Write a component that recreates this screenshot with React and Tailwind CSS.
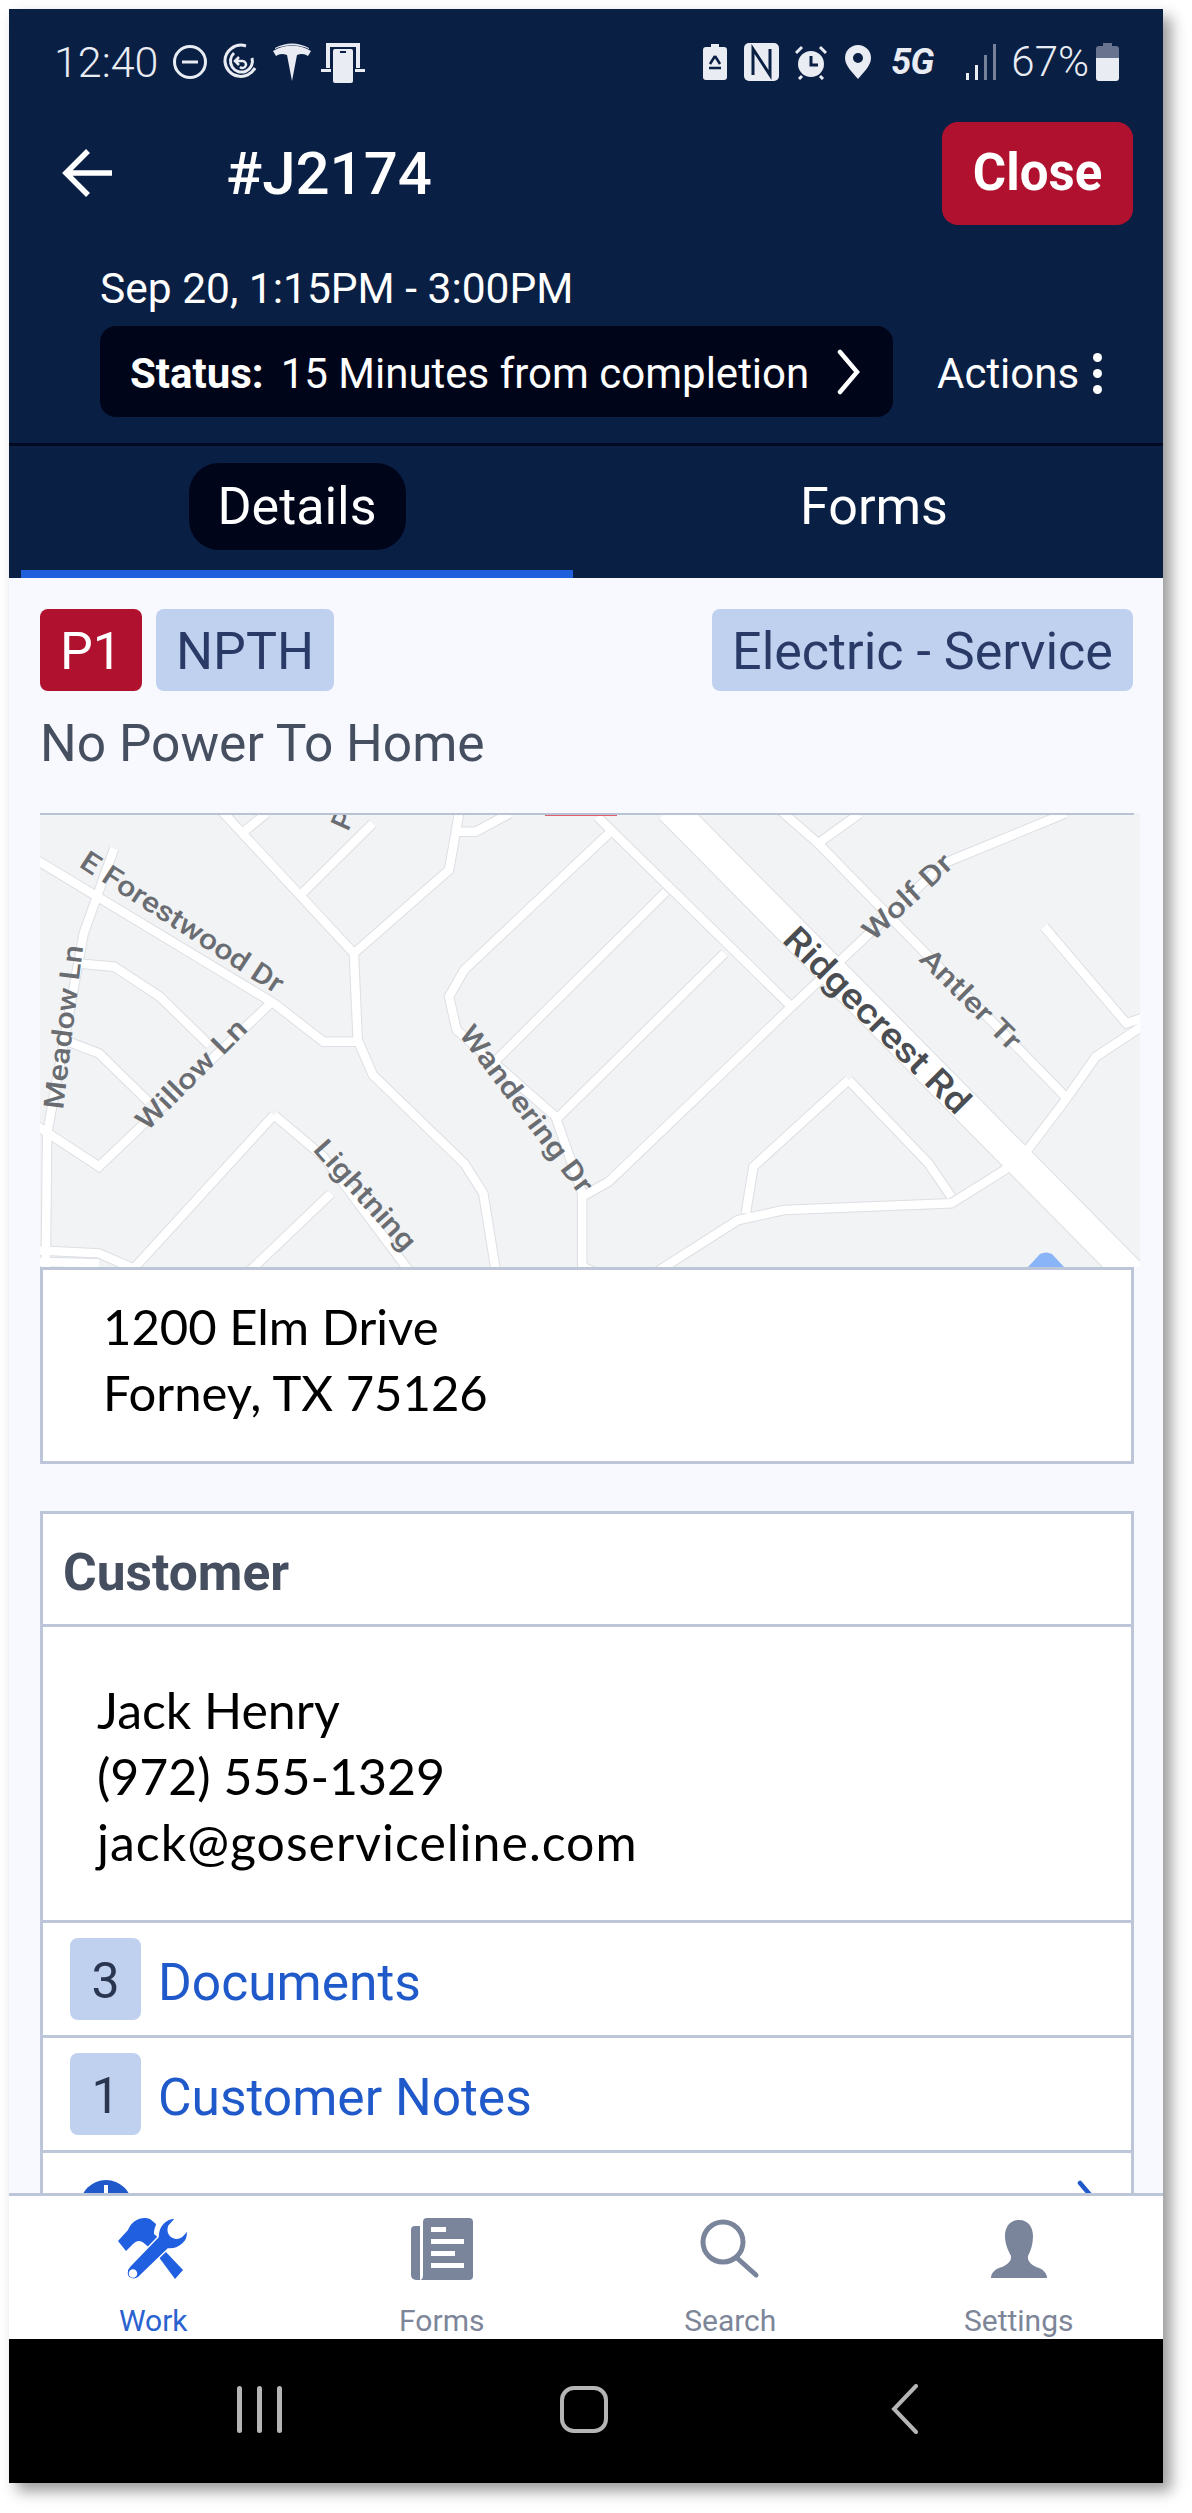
// road polylines, read off the map at reference scale
const toMap = (pts) => pts.map(([x, y]) => `${x / 1.314 - 40},${y / 3 - 13}`).join(' ')

const minorRoads = [
  [[290, 30], [465, 460], [470, 720], [490, 825], [610, 1090], [635, 1180], [652, 1420]],
  [[604, 30], [590, 210], [465, 460]],
  [[600, 95], [625, 95], [670, 40]],
  [[315, 105], [350, 40]],
  [[395, 285], [490, 70]],
  [[800, 100], [610, 510], [590, 590], [600, 690], [730, 950], [765, 1180], [765, 1400], [785, 1420]],
  [[785, 50], [1040, 620]],
  [[875, 275], [650, 785]],
  [[952, 460], [730, 960]],
  [[1400, 40], [1240, 190], [1040, 620], [800, 1145], [765, 1190]],
  [[1025, 30], [1075, 130], [1400, 890]],
  [[1075, 130], [1130, 40]],
  [[1372, 380], [1480, 670], [1520, 640]],
  [[1520, 650], [1440, 770], [1400, 900], [1350, 1050], [1320, 1110], [1250, 1210], [1030, 1230], [970, 1260], [860, 1420]],
  [[1115, 840], [990, 1100], [980, 1240]],
  [[1115, 840], [1220, 1090], [1250, 1190]],
  [[30, 155], [360, 610], [425, 725], [470, 725]],
  [[150, 145], [110, 400], [62, 1000], [60, 1420]],
  [[360, 600], [130, 1100], [40, 965]],
  [[100, 490], [150, 500], [210, 590], [275, 735]],
  [[90, 725], [130, 760], [195, 905]],
  [[360, 945], [170, 1420]],
  [[360, 945], [425, 1070], [540, 1420]],
  [[435, 1180], [325, 1420]],
  [[40, 1350], [130, 1360], [180, 1410]],
  [[40, 1385], [130, 1390]],
]

const mapLabels = [
  { text: 'E Forestwood Dr', x: 38, y: 53, angle: 33, size: 28, len: 236 },
  { text: 'Meadow Ln', x: 23, y: 297, angle: -83, size: 28, len: 165 },
  { text: 'Willow Ln', x: 107, y: 319, angle: -45, size: 28, len: 144 },
  { text: 'Lightning', x: 272, y: 337, angle: 48, size: 28, len: 138 },
  { text: 'Wandering Dr', x: 418, y: 221, angle: 53, size: 28, len: 202 },
  { text: 'Ridgecrest Rd', x: 741, y: 128, angle: 45, size: 35, len: 248, color: '#4a4d51' },
  { text: 'Wolf Dr', x: 833, y: 129, angle: -43, size: 28, len: 112 },
  { text: 'Antler Tr', x: 878, y: 147, angle: 45, size: 28, len: 130 },
  { text: 'P', x: 308, y: 19, angle: -66, size: 28, len: 18 },
]

function StreetMap() {
  return (
    <svg width="1100" height="454" viewBox="0 0 1100 454" className="block">
      <rect width="1100" height="454" fill="#f2f3f5" />
      {minorRoads.map((road, i) => (
        <polyline key={i} points={toMap(road)} fill="none" stroke="#dcdfe3" strokeWidth="10.5" />
      ))}
      <line x1="630" y1="-5" x2="1100" y2="470" stroke="#dcdfe3" strokeWidth="32" />
      {minorRoads.map((road, i) => (
        <polyline key={i} points={toMap(road)} fill="none" stroke="#ffffff" strokeWidth="8.5" />
      ))}
      <line x1="630" y1="-5" x2="1100" y2="470" stroke="#ffffff" strokeWidth="30" />
      {mapLabels.map((l) => (
        <text
          key={l.text}
          x={l.x}
          y={l.y}
          transform={`rotate(${l.angle} ${l.x} ${l.y})`}
          fontFamily="Roboto, sans-serif"
          fontSize={l.size}
          fontWeight={500}
          fill={l.color || '#696d72'}
          textLength={l.len}
          lengthAdjust="spacingAndGlyphs"
        >
          {l.text}
        </text>
      ))}
      <path d="M988 454 L1000 441 Q1006 438 1012 441 L1024 454 Z" fill="#8ab4f8" />
      <rect x="505" y="0" width="72" height="3" fill="#e0606e" />
      <rect x="0" y="0" width="1094" height="2" fill="#b9c3d6" />
    </svg>
  )
}

function StatusLeftIcons() {
  return (
    <div className="flex items-center text-[#e9ecf3]">
      <svg width="36" height="36" viewBox="0 0 36 36" className="ml-[14px]" fill="none" stroke="currentColor" strokeWidth="3">
        <circle cx="18" cy="18" r="15.5" />
        <line x1="10" y1="18" x2="26" y2="18" />
      </svg>
      <svg width="36" height="38" viewBox="0 0 36 38" className="ml-[14px]" fill="none" stroke="currentColor" strokeWidth="3">
        <path d="M24 3 A16 16 0 0 0 3 19 A16 16 0 0 0 33 25" />
        <path d="M12 10 A11 11 0 1 0 30 15" />
        <path d="M17 22 L13 18 L17 14 M14 18 H20 A3.5 3.5 0 1 1 18 24" strokeWidth="2.5" />
      </svg>
      <svg width="40" height="38" viewBox="0 0 40 38" className="ml-[14px]" fill="currentColor">
        <path d="M20 38 L15 12 C10 10 7 11 4 13 L1 8 C12 1 28 1 39 8 L36 13 C33 11 30 10 25 12 Z M3 5 C14 -1 26 -1 37 5 L37 6 C26 1 14 1 3 6 Z" />
      </svg>
      <svg width="44" height="42" viewBox="0 0 44 42" className="ml-[9px]" fill="currentColor">
        <path d="M5 2 H39 V27 H35 V6 H9 V27 H5 Z" />
        <rect x="12" y="8" width="20" height="34" rx="2" />
        <rect x="0" y="28" width="10" height="3" />
        <rect x="34" y="28" width="10" height="3" />
        <rect x="19" y="10" width="6" height="2" fill="#0a1f44" />
      </svg>
    </div>
  )
}

function StatusRightIcons() {
  return (
    <div className="flex items-center text-[#e9ecf3]">
      <svg width="24" height="36" viewBox="0 0 24 36" fill="currentColor">
        <path d="M8 0 H16 V3 H21 A3 3 0 0 1 24 6 V33 A3 3 0 0 1 21 36 H3 A3 3 0 0 1 0 33 V6 A3 3 0 0 1 3 3 H8 Z" />
        <path d="M12 12 L7 20 M12 12 L17 20 M6 24 H18" stroke="#0a1f44" strokeWidth="2.5" fill="none" />
      </svg>
      <svg width="35" height="38" viewBox="0 0 35 38" className="ml-[17px]" fill="currentColor">
        <rect width="35" height="38" rx="5" />
        <path d="M9 32 V6 L26 32 V6" fill="none" stroke="#0a1f44" strokeWidth="3" />
      </svg>
      <svg width="32" height="36" viewBox="0 0 32 36" className="ml-[16px]" fill="currentColor">
        <circle cx="16" cy="20" r="13" />
        <path d="M1 9 L7 3 M31 9 L25 3 M7 32 L4 35 M25 32 L28 35" stroke="currentColor" strokeWidth="3" />
        <path d="M16 12 V21 H23" fill="none" stroke="#0a1f44" strokeWidth="3" />
      </svg>
      <svg width="26" height="34" viewBox="0 0 26 34" className="ml-[18px]" fill="currentColor">
        <path fillRule="evenodd" d="M13 0 A13 13 0 0 1 26 13 C26 21 18 28 13 34 C8 28 0 21 0 13 A13 13 0 0 1 13 0 Z M13 8 A5 5 0 1 0 13 18 A5 5 0 1 0 13 8 Z" />
      </svg>
      <span className="ml-[20px] w-[46px] font-[Roboto,sans-serif] text-[36px] leading-none font-bold tracking-[-1px] italic">5G</span>
      <svg width="31" height="38" viewBox="0 0 31 38" className="ml-[29px]">
        <rect x="0" y="30" width="3" height="7" fill="#e9ecf3" />
        <rect x="9" y="22" width="3" height="15" fill="#e9ecf3" />
        <rect x="18" y="12" width="3" height="25" fill="#76819a" />
        <rect x="27" y="1" width="3" height="36" fill="#76819a" />
      </svg>
      <span className="ml-[14px] font-[Roboto,sans-serif] text-[42px] leading-none font-light">67%</span>
      <svg width="23" height="38" viewBox="0 0 23 38" className="ml-[7px]">
        <path d="M7 0 H16 V3 H20 A3 3 0 0 1 23 6 V15 H0 V6 A3 3 0 0 1 3 3 H7 Z" fill="#67738f" />
        <path d="M0 15 H23 V35 A3 3 0 0 1 20 38 H3 A3 3 0 0 1 0 35 Z" fill="#e9ecf3" />
      </svg>
    </div>
  )
}

function ToolsIcon() {
  return (
    <svg width="70" height="62" viewBox="0 0 70 62" fill="#1f5fe0">
      <path d="M0 23 L8 33 L15 26 C19 22 23 22 27 26 L34 32 L43 22 L36 16 C36 10 38 8 38 6 L32 1 C24 -2 14 2 10 12 Z" />
      <path d="M40 38 L57 61 L65 52 L47 33 Z" />
      <path
        fillRule="evenodd"
        d="M40 19 C40 8 47 0 58 0 L51 8 C49 13 51 19 57 20 C62 21 66 17 69 12 C72 22 62 32 50 31 L21 59 C16 63 9 61 9 55 C9 52 10 50 12 48 Z M15 52 A3.5 3.5 0 1 0 15 59 A3.5 3.5 0 1 0 15 52 Z"
        stroke="#ffffff"
        strokeWidth="1.5"
      />
    </svg>
  )
}

function FormsIcon() {
  return (
    <svg width="62" height="62" viewBox="0 0 62 62" fill="#7a859c">
      <path d="M9 8 H4 A4 4 0 0 0 0 12 V57 A5 5 0 0 0 5 62 H9 Z" />
      <path d="M12 4 A4 4 0 0 1 16 0 H58 A4 4 0 0 1 62 4 V58 A4 4 0 0 1 58 62 H9 C12 62 12 58 12 56 Z" />
      <rect x="20" y="9" width="15" height="5" fill="#fff" />
      <rect x="20" y="21" width="33" height="5" fill="#fff" />
      <rect x="20" y="33" width="24" height="5" fill="#fff" />
      <rect x="20" y="45" width="33" height="5" fill="#fff" />
    </svg>
  )
}

function SearchIcon() {
  return (
    <svg width="60" height="60" viewBox="0 0 60 60" fill="none" stroke="#7a859c" strokeWidth="5" strokeLinecap="round">
      <circle cx="23" cy="23" r="20" />
      <line x1="37" y1="39" x2="56" y2="56" />
    </svg>
  )
}

function PersonIcon() {
  return (
    <svg width="56" height="58" viewBox="0 0 56 58" fill="#7a859c">
      <path d="M28 0 C38 0 42 8 42 16 C42 24 40 30 37 36 C36 42 42 46 48 48 C53 50 56 54 56 58 H0 C0 54 3 50 8 48 C14 46 21 42 20 36 C17 30 14 24 14 16 C14 8 18 0 28 0 Z" />
    </svg>
  )
}

function NavItem({ icon, label, active }) {
  return (
    <div className="flex w-[289px] flex-col items-center">
      <div className="flex h-[62px] items-center justify-center">{icon}</div>
      <span className={`mt-[23px] font-[Roboto,sans-serif] text-[30px] leading-[36px] ${active ? 'text-[#2a62cf]' : 'text-[#7d8699]'}`}>{label}</span>
    </div>
  )
}

function CountRow({ count, label }) {
  return (
    <div className="flex h-[115px] items-center border-b-[3px] border-[#bcc6d8] pl-[27px]">
      <span className="flex h-[82px] w-[71px] items-center justify-center rounded-[8px] bg-[#c0d1f0] pt-[4px] font-[Roboto,sans-serif] text-[50px] text-[#2a3550]">{count}</span>
      <span className="ml-[17px] pt-[8px] font-[Roboto,sans-serif] text-[51.5px] text-[#2059c9]">{label}</span>
    </div>
  )
}

export default function App() {
  return (
    <div className="h-[2513px] w-[1192px] overflow-hidden bg-white pt-[9px] pl-[9px]">
      <div className="flex h-[2474px] w-[1154px] flex-col overflow-hidden bg-[#f8f9ff] shadow-[8px_8px_14px_rgba(0,0,0,0.4)]">
        <header className="bg-[#0a1f44] font-[Roboto,sans-serif] text-white">
          <div className="flex h-[106px] items-center justify-between pr-[44px] pl-[45px]">
            <div className="flex items-center">
              <span className="text-[43px] leading-none font-light text-[#e9ecf3]">12:40</span>
              <StatusLeftIcons />
            </div>
            <StatusRightIcons />
          </div>
          <div className="flex h-[116px] items-center justify-between pr-[30px] pl-[53px]">
            <div className="flex items-center">
              <svg width="50" height="48" viewBox="0 0 50 48" fill="none" stroke="white" strokeWidth="5.5">
                <path d="M26 2 L4 24 L26 46 M4 24 H50" />
              </svg>
              <h1 className="ml-[114px] pt-[2px] text-[60px] leading-none font-medium">#J2174</h1>
            </div>
            <button className="h-[103px] w-[191px] rounded-[16px] bg-[#b0112e] text-[51px] font-bold">Close</button>
          </div>
          <div className="flex h-[95px] items-center pt-[20px] pl-[91px] text-[42.5px]">Sep 20, 1:15PM - 3:00PM</div>
          <div className="flex h-[117px] items-start pl-[91px]">
            <div className="flex h-[91px] w-[793px] items-center rounded-[16px] bg-[#01051a] pl-[30px]">
              <span className="pt-[4px] text-[42px] font-bold">Status:</span>
              <span className="ml-[17px] pt-[4px] text-[42px]">15 Minutes from completion</span>
              <svg width="24" height="46" viewBox="0 0 24 46" className="ml-[28px]" fill="none" stroke="white" strokeWidth="4.5" strokeLinecap="round">
                <path d="M3 3 L20 23 L3 43" />
              </svg>
            </div>
            <div className="ml-[44px] flex h-[91px] items-center pt-[4px] text-[42px]">
              Actions
              <span className="ml-[14px] flex flex-col gap-[7px]">
                <span className="h-[9px] w-[9px] rounded-full bg-white" />
                <span className="h-[9px] w-[9px] rounded-full bg-white" />
                <span className="h-[9px] w-[9px] rounded-full bg-white" />
              </span>
            </div>
          </div>
          <div className="h-[3px] bg-[#010a20]" />
          <div className="flex h-[132px] text-[52px]">
            <div className="ml-[12px] flex h-[132px] w-[552px] items-start justify-center border-b-[8px] border-[#2060dc] pt-[17px]">
              <span className="flex h-[87px] w-[217px] items-center justify-center rounded-[30px] bg-[#01051a]">Details</span>
            </div>
            <div className="flex flex-1 items-start justify-center pt-[17px] pl-[12px]">
              <span className="flex h-[87px] items-center">Forms</span>
            </div>
          </div>
        </header>

        <main className="relative flex-1 overflow-hidden px-[31px] pt-[31px]">
          <div className="flex h-[82px] font-[Roboto,sans-serif] text-[52px]">
            <span className="flex w-[102px] items-center justify-center rounded-[8px] bg-[#b0112e] pt-[4px] text-white">P1</span>
            <span className="ml-[14px] flex w-[178px] items-center justify-center rounded-[8px] bg-[#c0d1f0] pt-[4px] text-[#2a3a66]">NPTH</span>
            <span className="mr-[-1px] ml-auto flex w-[421px] items-center justify-center rounded-[8px] bg-[#c0d1f0] pt-[4px] text-[#2a3a66]">Electric - Service</span>
          </div>
          <p className="mt-[23px] font-[Roboto,sans-serif] text-[51.5px] leading-[60px] text-[#454f60]">No Power To Home</p>

          <div className="mt-[39px] w-[1094px]">
            <StreetMap />
            <div className="h-[197px] border-[3px] border-[#bcc6d8] bg-white pt-[23px] pl-[60px] font-[Lato,sans-serif] text-[49px] leading-[66px] text-black">
              <div>1200 Elm Drive</div>
              <div>Forney, TX 75126</div>
            </div>
          </div>

          <section className="mt-[47px] w-[1094px] border-x-[3px] border-t-[3px] border-[#bcc6d8] bg-white">
            <div className="flex h-[113px] items-center border-b-[3px] border-[#bcc6d8] pt-[7px] pl-[20px] font-[Roboto,sans-serif] text-[51.5px] font-bold text-[#454f60]">Customer</div>
            <div className="h-[296px] border-b-[3px] border-[#bcc6d8] pt-[50px] pl-[54px] font-[Lato,sans-serif] text-[50px] leading-[66px] text-black">
              <div>Jack Henry</div>
              <div>(972) 555-1329</div>
              <div className="tracking-[1px]">jack@goserviceline.com</div>
            </div>
            <CountRow count="3" label="Documents" />
            <CountRow count="1" label="Customer Notes" />
            <div className="flex h-[115px] items-start justify-between pt-[27px] pr-[30px] pl-[37px]">
              <span className="relative h-[52px] w-[52px] rounded-full bg-[#2059c9]">
                <span className="absolute top-[5px] left-[24px] h-[10px] w-[4px] bg-white" />
              </span>
              <svg width="24" height="46" viewBox="0 0 24 46" fill="none" stroke="#2059c9" strokeWidth="4.5" strokeLinecap="round">
                <path d="M3 3 L20 23 L3 43" />
              </svg>
            </div>
          </section>
        </main>

        <nav className="flex h-[146px] shrink-0 border-t-[3px] border-[#bcc6d8] bg-white pt-[22px]">
          <NavItem icon={<ToolsIcon />} label="Work" active />
          <NavItem icon={<FormsIcon />} label="Forms" />
          <NavItem icon={<SearchIcon />} label="Search" />
          <NavItem icon={<PersonIcon />} label="Settings" />
        </nav>
        <div className="flex h-[144px] shrink-0 items-center bg-black pb-[4px]">
          <div className="ml-[228px] flex h-[47px] gap-[15px]">
            <span className="w-[5px] rounded-full bg-[#b5b5b5]" />
            <span className="w-[5px] rounded-full bg-[#b5b5b5]" />
            <span className="w-[5px] rounded-full bg-[#b5b5b5]" />
          </div>
          <span className="ml-[278px] h-[47px] w-[48px] rounded-[14px] border-[4px] border-[#b5b5b5]" />
          <svg width="28" height="50" viewBox="0 0 28 50" className="ml-[283px]" fill="none" stroke="#b5b5b5" strokeWidth="4" strokeLinecap="round">
            <path d="M25 2 L3 25 L25 48" />
          </svg>
        </div>
      </div>
    </div>
  )
}
